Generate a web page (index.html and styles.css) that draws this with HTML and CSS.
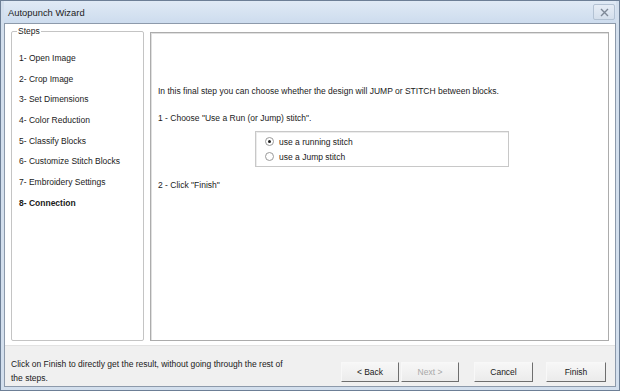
FILE: index.html
```html
<!DOCTYPE html>
<html lang="en">
<head>
<meta charset="UTF-8">
<title>Autopunch Wizard</title>
<link rel="stylesheet" href="styles.css">
</head>
<body>
<div class="window">
    <header class="title-bar">
        <span class="title">Autopunch Wizard</span>
        <span class="close-btn">
            <svg width="9" height="9" viewBox="0 0 9 9"><path d="M1 1 L8 8 M8 1 L1 8" stroke="#7d8896" stroke-width="1.4"/></svg>
        </span>
    </header>
    <div class="client">
        <main class="main-content">
            <fieldset class="steps">
                <legend class="steps-legend">Steps</legend>
                <ul class="step-list">
                    <li class="step">1- Open Image</li>
                    <li class="step">2- Crop Image</li>
                    <li class="step">3- Set Dimensions</li>
                    <li class="step">4- Color Reduction</li>
                    <li class="step">5- Classify Blocks</li>
                    <li class="step">6- Customize Stitch Blocks</li>
                    <li class="step">7- Embroidery Settings</li>
                    <li class="step active">8- Connection</li>
                </ul>
            </fieldset>
            <section class="page">
                <p class="intro">In this final step you can choose whether the design will JUMP or STITCH between blocks.</p>
                <p class="line">1 - Choose "Use a Run (or Jump) stitch".</p>
                <div class="option-box">
                    <label class="option"><span class="radio checked"></span>use a running stitch</label>
                    <label class="option"><span class="radio"></span>use a Jump stitch</label>
                </div>
                <p class="line">2 - Click "Finish"</p>
            </section>
        </main>
        <footer class="footer">
            <p class="hint">Click on Finish to directly get the result, without going through the rest of the steps.</p>
            <div class="buttons">
                <button class="btn">&lt; Back</button>
                <button class="btn disabled">Next &gt;</button>
                <button class="btn cancel">Cancel</button>
                <button class="btn finish">Finish</button>
            </div>
        </footer>
    </div>
</div>
</body>
</html>
```

FILE: styles.css
```css
body {
    margin: 0;
    font-family: "Liberation Sans", Tahoma, sans-serif;
    font-size: 8.5px;
    color: #1a1a1a;
}
.window {
    width: 620px;
    height: 391px;
    box-sizing: border-box;
    display: flex;
    flex-direction: column;
    background: #d3dfed;
    border: 1px solid #6d7f96;
    padding: 0 3px 3px 3px;
}
.title-bar {
    height: 22px;
    flex-shrink: 0;
    display: flex;
    align-items: center;
    justify-content: space-between;
    background: linear-gradient(#e0eaf5, #cddcee);
}
.title {
    padding-left: 4px;
    font-size: 9.4px;
    color: #222;
}
.close-btn {
    width: 20px;
    height: 14px;
    margin-right: 1px;
    display: flex;
    align-items: center;
    justify-content: center;
    border: 1px solid #b3c2d3;
    border-radius: 2px;
    background: linear-gradient(#e6edf6, #d4dfec);
}
.client {
    flex: 1;
    display: flex;
    flex-direction: column;
    background: #fff;
    border: 1px solid #8d9aab;
}
.main-content {
    flex: 1;
    display: flex;
    gap: 6px;
    padding: 2px 6px 4px 6px;
}
.steps {
    width: 133px;
    box-sizing: border-box;
    margin: 0;
    padding: 12px 0 0 7px;
    border: 1px solid #c4c4c4;
    border-radius: 2px;
}
.steps-legend {
    padding: 0 1px;
    margin-left: -2px;
    font-size: 8.5px;
}
.step-list {
    list-style: none;
    margin: 0;
    padding: 0;
}
.step {
    height: 20.7px;
    line-height: 20.7px;
}
.step.active {
    font-weight: bold;
}
.page {
    flex: 1;
    margin-top: 6px;
    padding: 51px 0 0 7px;
    border: 1px solid #acacac;
    box-shadow: inset 1px 1px 0 #e0e0e0;
}
.intro {
    margin: 0 0 13px 0;
    line-height: 14px;
}
.line {
    margin: 0;
    line-height: 14px;
}
.option-box {
    width: 254px;
    box-sizing: border-box;
    margin: 6px 0 11px 97px;
    padding: 2px 0 2px 9px;
    border: 1px solid #c8c8c8;
    box-shadow: inset 1px 1px 0 #ececec;
}
.option {
    display: flex;
    align-items: center;
    gap: 5px;
    height: 15px;
}
.radio {
    width: 9px;
    height: 9px;
    border-radius: 50%;
    border: 1px solid #9a9a9a;
    background: #fff;
    box-sizing: border-box;
    display: flex;
    align-items: center;
    justify-content: center;
}
.radio.checked::after {
    content: "";
    width: 3px;
    height: 3px;
    border-radius: 50%;
    background: #222;
}
.footer {
    height: 41px;
    box-sizing: border-box;
    flex-shrink: 0;
    display: flex;
    align-items: center;
    justify-content: space-between;
    padding: 9px 9px 0 6px;
    background: #f0f0f0;
    border-top: 1px solid #e2e2e2;
}
.hint {
    width: 272px;
    margin: 0;
    line-height: 14px;
}
.buttons {
    display: flex;
    align-items: center;
    margin-top: 2px;
}
.btn {
    width: 58px;
    height: 20px;
    margin: 0 0 0 2px;
    padding: 0;
    font-family: "Liberation Sans", Tahoma, sans-serif;
    font-size: 8.5px;
    color: #1a1a1a;
    background: linear-gradient(#f7f7f7, #ebebeb);
    border: 1px solid #f8f8f8;
    border-right-color: #6e6e6e;
    border-bottom-color: #6e6e6e;
}
.btn.disabled {
    color: #a8a8a8;
}
.btn.cancel {
    margin-left: 15px;
    width: 59px;
}
.btn.finish {
    margin-left: 13px;
    width: 60px;
}
```
